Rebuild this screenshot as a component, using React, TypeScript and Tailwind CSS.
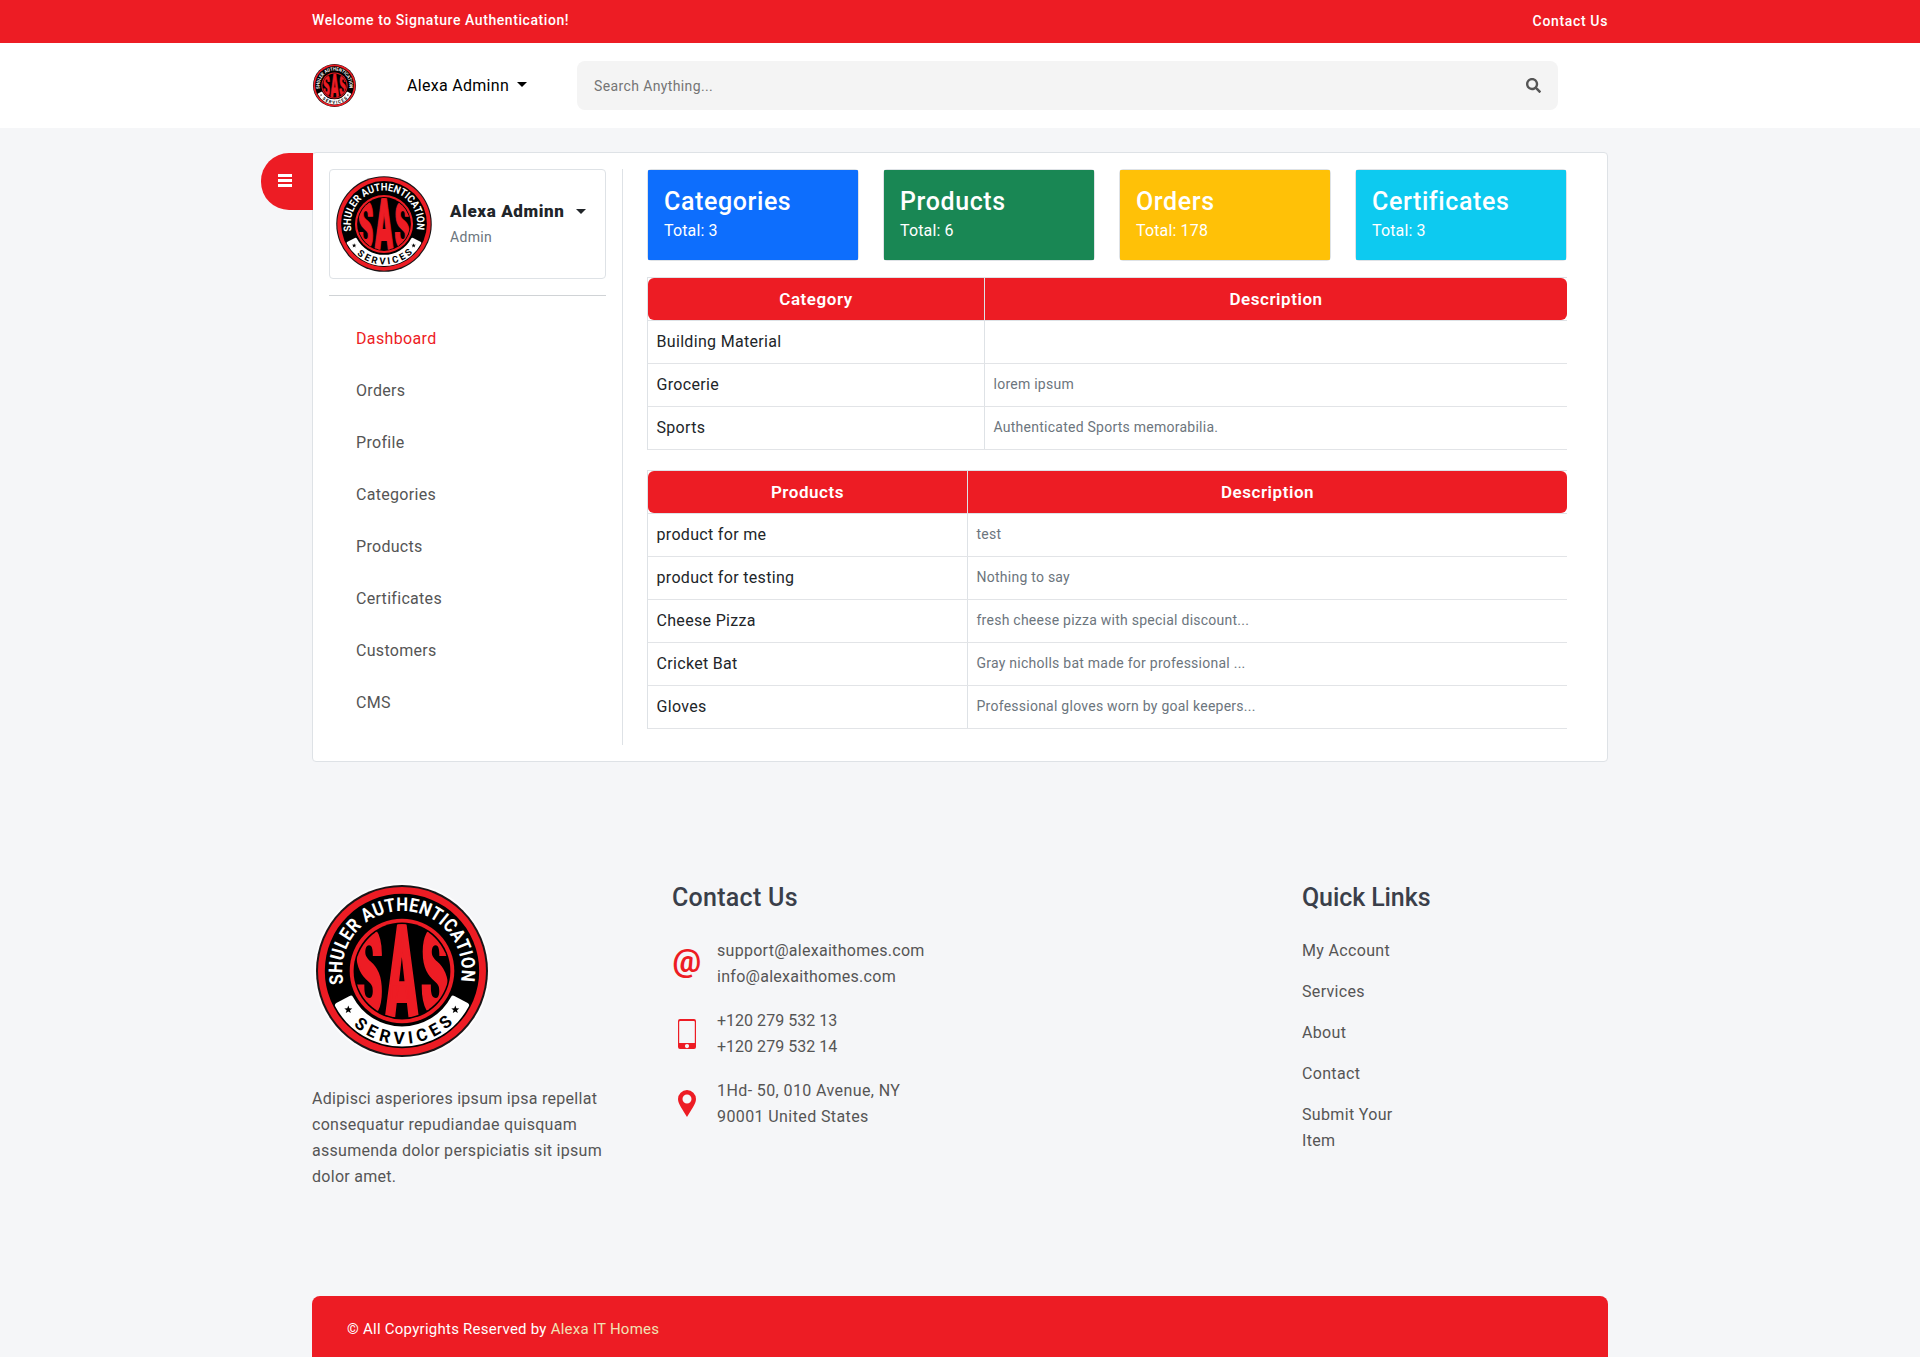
import React from "react";
import { FaSearch } from "react-icons/fa";

const STAR = "M0 -4.200L1.050 -1.400L4 -1.300L1.700 0.550L2.500 3.400L0 1.750L-2.500 3.400L-1.700 0.550L-4 -1.300L-1.050 -1.400Z";

function Logo({ size, id, glow = false }: { size: number; id: string; glow?: boolean }) {
  return (
    <svg width={size} height={size} viewBox="-90 -90 180 180" className="block shrink-0">
      <defs>
        <path id={`${id}-top`} d="M -58.4 12.6 A 59.8 59.8 0 1 1 58.4 12.6" />
        <path id={`${id}-bottom`} d="M -51.6 51.6 A 73 73 0 0 0 51.6 51.6" />
        <clipPath id={`${id}-disc`}>
          <circle r="46.8" />
        </clipPath>
      </defs>
      {glow && <circle r="88" fill="#fff" opacity="0.7" />}
      <circle r="86" fill="#1a1416" />
      <circle r="84" fill="#ed1c24" />
      <circle r="77.2" fill="#000" />
      <path
        d="M -51.2 27.2 A 58 58 0 0 0 51.2 27.2 L 64.500 34.300 A 73 73 0 0 1 -64.500 34.300 Z"
        fill="#fff"
        stroke="#fff"
        strokeWidth="5"
        strokeLinejoin="round"
      />
      <path d={STAR} transform="translate(-53.7 38.7)" />
      <path d={STAR} transform="translate(53.3 38.7)" />
      <circle r="52.3" fill="#ed1c24" />
      <circle r="48.4" fill="#000" />
      <g clipPath={`url(#${id}-disc)`} fill="#ed1c24" stroke="#ed1c24" strokeWidth="1.3" fontFamily="Roboto" fontWeight="900">
        <text transform="translate(-47.5 43) scale(1 2.75)" fontSize="43" textLength="28.500" lengthAdjust="spacingAndGlyphs">S</text>
        <text transform="translate(-16.5 47.5) scale(1 3.1)" fontSize="43" textLength="33" lengthAdjust="spacingAndGlyphs">A</text>
        <text transform="translate(19 43) scale(1 2.75)" fontSize="43" textLength="28.500" lengthAdjust="spacingAndGlyphs">S</text>
      </g>
      <text fill="#fff" fontFamily="Roboto" fontWeight="700" fontSize="19">
        <textPath href={`#${id}-top`} textLength="211" lengthAdjust="spacingAndGlyphs">SHULER AUTHENTICATION</textPath>
      </text>
      <text fill="#000" fontFamily="Roboto" fontWeight="700" fontSize="17">
        <textPath href={`#${id}-bottom`} startOffset="4" textLength="110" lengthAdjust="spacing">SERVICES</textPath>
      </text>
    </svg>
  );
}

function Caret() {
  return <span className="inline-block border-x-[5px] border-t-[5px] border-x-transparent border-t-current" />;
}

const stats = [
  { title: "Categories", total: "Total: 3", cls: "bg-[#0d6efd]" },
  { title: "Products", total: "Total: 6", cls: "bg-[#198754]" },
  { title: "Orders", total: "Total: 178", cls: "bg-[#ffc107]" },
  { title: "Certificates", total: "Total: 3", cls: "bg-[#0dcaf0]" },
];

const menu = ["Dashboard", "Orders", "Profile", "Categories", "Products", "Certificates", "Customers", "CMS"];

const categories = [
  ["Building Material", ""],
  ["Grocerie", "lorem ipsum"],
  ["Sports", "Authenticated Sports memorabilia."],
];

const products = [
  ["product for me", "test"],
  ["product for testing", "Nothing to say"],
  ["Cheese Pizza", "fresh cheese pizza with special discount..."],
  ["Cricket Bat", "Gray nicholls bat made for professional ..."],
  ["Gloves", "Professional gloves worn by goal keepers..."],
];

function DataTable({ head, rows, firstCol }: { head: string; rows: string[][]; firstCol: string }) {
  return (
    <div className="border-l border-t border-[#dee2e6]">
      <div className="flex h-[43px] border-b border-[#dee2e6]">
        <div className="flex flex-1 overflow-hidden rounded-[6px] bg-[#ed1c24] pt-px text-[17px] font-semibold tracking-[0.55px] text-white">
          <div className={`${firstCol} -mt-px flex shrink-0 items-center justify-center border-r border-[#dee2e6] pt-px`}>{head}</div>
          <div className="flex flex-1 items-center justify-center">Description</div>
        </div>
      </div>
      {rows.map(([name, description]) => (
        <div key={name} className="flex h-[43px] border-b border-[#e2e4e7]">
          <div className={`${firstCol} flex shrink-0 items-center border-r border-[#dee2e6] pl-[8.5px] text-base tracking-[0.32px] text-[#212529]`}>{name}</div>
          <div className="flex flex-1 items-center pb-[2px] pl-[8.5px] text-sm tracking-[0.25px] text-[#6c757d]">{description}</div>
        </div>
      ))}
    </div>
  );
}

function ContactRow({ icon, lines, textClass = "" }: { icon: React.ReactNode; lines: string[]; textClass?: string }) {
  return (
    <div className="flex h-[52px] items-center">
      <div className="flex w-[45px] shrink-0 pl-px">
        <div className="flex w-7 justify-center">{icon}</div>
      </div>
      <div className={textClass}>
        {lines.map((line) => (
          <div key={line}>{line}</div>
        ))}
      </div>
    </div>
  );
}

export default function App() {
  return (
    <div className="flex h-[1357px] w-[1920px] flex-col overflow-hidden bg-[#f5f6f8] font-['Roboto',sans-serif]">
      <div className="h-[43px] bg-[#ed1c24]">
        <div className="mx-auto flex h-full w-[1296px] items-center justify-between text-sm font-medium text-white">
          <span className="pb-[3px] tracking-[0.57px]">Welcome to Signature Authentication!</span>
          <span className="pb-px tracking-[0.65px]">Contact Us</span>
        </div>
      </div>

      <header className="h-[85px] bg-white">
        <div className="mx-auto flex h-full w-[1296px] items-center">
          <Logo size={45} id="nav" />
          <div className="ml-[50px] flex w-[170px] items-center text-base text-black">
            <span className="tracking-[0.3px]">Alexa Adminn</span>
            <span className="ml-2 flex pb-0.5"><Caret /></span>
          </div>
          <div className="flex h-[49px] w-[981px] items-center justify-between rounded-lg bg-[#f4f4f4] px-[17px]">
            <span className="text-sm tracking-[0.38px] text-[#757575]">Search Anything...</span>
            <FaSearch className="size-[15px] text-[#555]" />
          </div>
        </div>
      </header>

      <main className="relative mx-auto mt-6 flex h-[610px] w-[1296px] shrink-0 rounded border border-[#dee2e6] bg-white p-4">
        <button className="absolute -left-[52px] top-0 flex h-[57px] w-[52px] flex-col items-start justify-center gap-0.5 rounded-l-[28px] bg-[#ed1c24] pb-0.5 pl-[17px]">
          <span className="h-[3px] w-3.5 bg-white" />
          <span className="h-[3px] w-3.5 bg-white" />
          <span className="h-[3px] w-3.5 bg-white" />
        </button>
        <aside className="flex w-[294px] shrink-0 flex-col border-r border-[#dee2e6] pr-4">
          <div className="flex h-[110px] items-center rounded border border-[#dee2e6] pl-1">
            <Logo size={100} id="profile" />
            <div className="ml-4">
              <div className="-mt-0.5 flex items-center text-[17px] leading-6 font-black tracking-[0.6px] text-[#212529]">
                <span>Alexa Adminn</span>
                <span className="ml-3 flex"><Caret /></span>
              </div>
              <div className="mt-1 text-sm tracking-[0.35px] text-[#6c757d]">Admin</div>
            </div>
          </div>
          <div className="mt-4 h-px bg-[#d0d3d6]" />
          <nav className="mt-[17px] flex flex-col pl-[27px] text-base text-[#555]">
            {menu.map((item, i) => (
              <a key={item} className={i === 0 ? "flex h-[52px] items-center tracking-[0.35px] text-[#ed1c24]" : "flex h-[52px] items-center tracking-[0.3px]"}>{item}</a>
            ))}
          </nav>
        </aside>
        <section className="ml-6 w-[920px]">
          <div className="grid grid-cols-4 gap-6">
            {stats.map((s) => (
              <div key={s.title} className="h-[92px] rounded border border-[#dee2e6]">
                <div className={`${s.cls} h-full rounded-[1px] px-4 pt-[17px] text-white`}>
                  <div className="text-[25px] leading-[30px] font-medium tracking-[0.6px]">{s.title}</div>
                  <div className="text-base leading-7 tracking-[0.15px]">{s.total}</div>
                </div>
              </div>
            ))}
          </div>
          <div className="mt-4 flex flex-col gap-5">
            <DataTable head="Category" rows={categories} firstCol="w-[337px]" />
            <DataTable head="Products" rows={products} firstCol="w-[320px]" />
          </div>
        </section>
      </main>

      <footer className="mx-auto flex w-[1296px] flex-1 flex-col text-base leading-[26px] tracking-[0.28px] text-[#555]">
        <div className="flex h-[534px] shrink-0 pt-[119px]">
          <div className="w-[360px]">
            <Logo size={180} id="footer" glow />
            <p className="mt-[25px] w-[300px]">
              Adipisci asperiores ipsum ipsa repellat<br />consequatur repudiandae quisquam<br />assumenda dolor perspiciatis sit ipsum<br />dolor amet.
            </p>
          </div>
          <div className="w-[630px] pt-0.5">
            <h4 className="text-[25px] leading-[30px] font-medium text-[#3a3f4a]">Contact Us</h4>
            <div className="mt-[25px] flex flex-col gap-[18px]">
              <ContactRow icon={<span className="pb-[7px] text-[32px] font-bold text-[#ed1c24]">@</span>} lines={["support@alexaithomes.com", "info@alexaithomes.com"]} />
              <ContactRow
                icon={
                  <svg width="18" height="30" viewBox="0 0 18 30" fill="#ed1c24" className="-mt-px">
                    <path fillRule="evenodd" d="M2 0h14a2 2 0 0 1 2 2v26a2 2 0 0 1-2 2H2a2 2 0 0 1-2-2V2a2 2 0 0 1 2-2zM1.200 3v21h15.600V3a1 1 0 0 0-1-1H2.200a1 1 0 0 0-1 1zM9 25a2.100 2.100 0 1 0 0 4.200a2.100 2.100 0 1 0 0-4.200z" />
                    <path d="M6 0h6v2H6z" />
                  </svg>
                }
                lines={["+120 279 532 13", "+120 279 532 14"]}
                textClass="tracking-[0.02px]"
              />
              <ContactRow
                icon={
                  <svg width="18" height="27" viewBox="0 0 18 27" fill="#ed1c24" className="-mt-px">
                    <path fillRule="evenodd" d="M9 0a9 9 0 0 1 9 9c0 5-5 11-9 18C5 20 0 14 0 9a9 9 0 0 1 9-9zM9 4.500a4.500 4.500 0 1 0 0 9a4.500 4.500 0 1 0 0-9z" />
                  </svg>
                }
                lines={["1Hd- 50, 010 Avenue, NY", "90001 United States"]}
                textClass="tracking-[0.4px]"
              />
            </div>
          </div>
          <div className="pt-0.5">
            <h4 className="text-[25px] leading-[30px] font-medium tracking-[-0.1px] text-[#3a3f4a]">Quick Links</h4>
            <div className="mt-[25px] flex flex-col gap-[15px] tracking-[0.33px]">
              <a>My Account</a>
              <a>Services</a>
              <a>About</a>
              <a>Contact</a>
              <a>Submit Your<br />Item</a>
            </div>
          </div>
        </div>
        <div className="flex flex-1 items-center rounded-t-lg bg-[#ed1c24] pt-[5px] pl-[35px] text-[15px] tracking-[0.25px] text-white">
          <span>© All Copyrights Reserved by <a className="text-[#f0e2b4]">Alexa IT Homes</a></span>
        </div>
      </footer>
    </div>
  );
}
